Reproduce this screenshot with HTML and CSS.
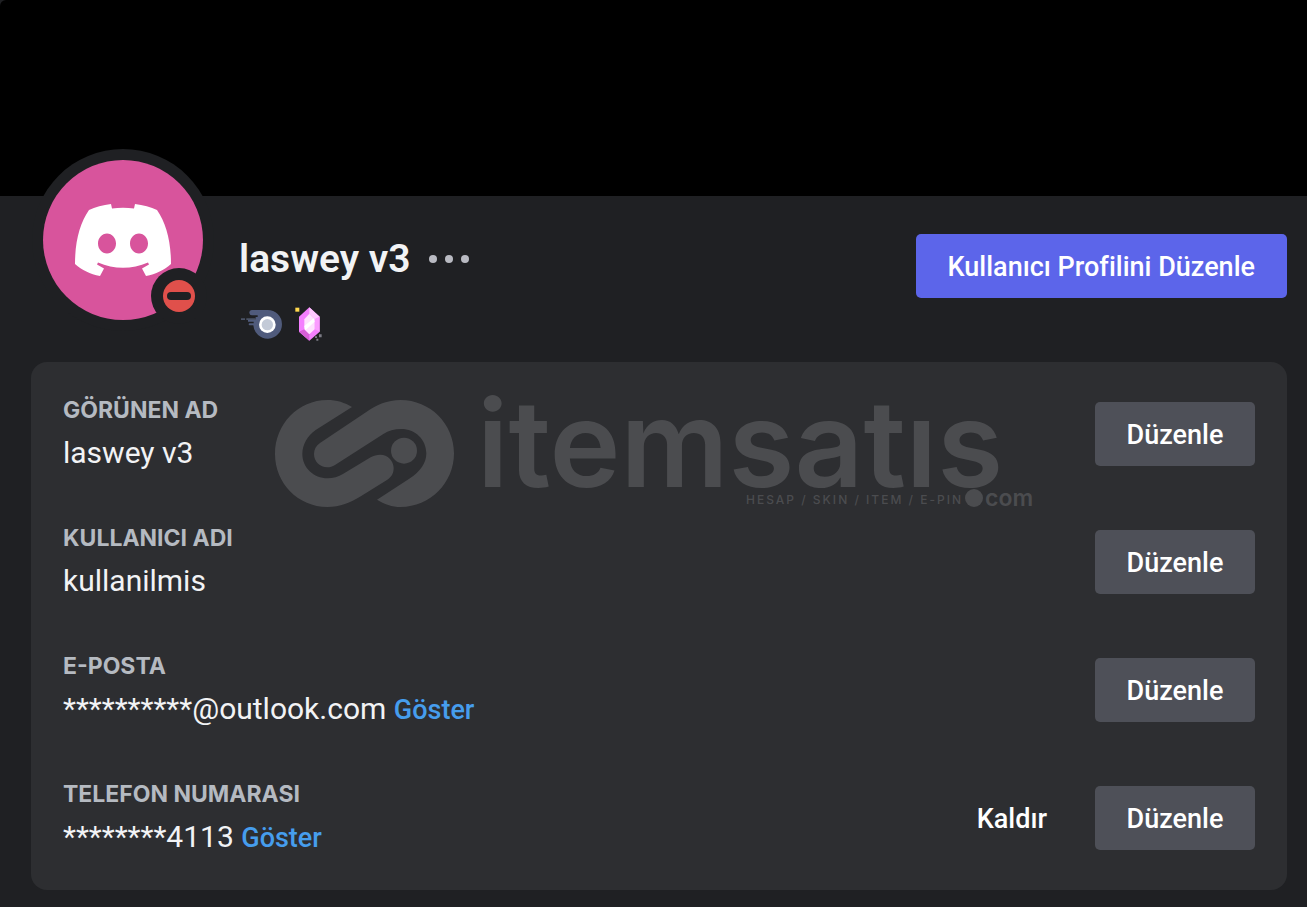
FILE: index.html
```html
<!DOCTYPE html>
<html lang="tr">
<head>
<meta charset="utf-8">
<meta name="viewport" content="width=device-width, initial-scale=1">
<title>Hesabım</title>
<link rel="stylesheet" href="styles.css">
</head>
<body>
<main class="account">
  <div class="banner"></div>

  <header class="profile">
    <svg class="avatar" viewBox="0 0 182 182" role="img" aria-label="Avatar, rahatsız etmeyin">
      <circle class="avatar-ring" cx="91" cy="91" r="91"/>
      <circle class="avatar-fill" cx="91" cy="91" r="80"/>
      <path class="avatar-mark" fill-rule="evenodd" d="M79 55 C71 56 63 58 57 61 C48 74 43 92 43 115 C50 121 58 125 68 127 L72 119.500 L65 115.500 L66 113.500 C82 120.500 100 120.500 116 113.500 L117 115.500 L110 119.500 L114 127 C124 125 132 121 139 115 C139 92 134 74 125 61 C119 58 111 56 103 55 L102 59.500 C95 58.500 87 58.500 80 59.500 Z M75 84.500 C80 84.500 84 89 84 94.500 C84 100 80 104.500 75 104.500 C70 104.500 66 100 66 94.500 C66 89 70 84.500 75 84.500 Z M107 84.500 C112 84.500 116 89 116 94.500 C116 100 112 104.500 107 104.500 C102 104.500 98 100 98 94.500 C98 89 102 84.500 107 84.500 Z"/>
      <circle class="avatar-ring" cx="147" cy="147" r="28"/>
      <circle class="status" cx="147" cy="147" r="16"/>
      <rect class="avatar-ring" x="135" y="143" width="24" height="8" rx="4"/>
    </svg>

    <div class="identity">
      <div class="name-row">
        <h1 class="name">laswey v3</h1>
        <button class="more" type="button" aria-label="Diğer">
          <svg viewBox="0 0 40 8" width="40" height="8"><circle cx="4" cy="4" r="4"/><circle cx="20" cy="4" r="4"/><circle cx="36" cy="4" r="4"/></svg>
        </button>
      </div>
      <div class="badges">
        <svg width="41" height="36" viewBox="0 0 123 108" aria-hidden="true">
          <path fill="#505b7c" d="M32 12 H80 A43 43 0 1 1 37 58 H26 A3 3 0 0 1 26 52 H38 V47 H21 V40 H44 V33 H50 V28 H34 A8 8 0 0 1 32 12 Z"/>
          <path fill="#4a5266" d="M0 37 H12 V42 H0 Z M16 37 H44 V42 H16 Z"/>
          <circle cx="79" cy="56" r="25" fill="#fff"/><circle cx="79" cy="56" r="17" fill="#c3cad7"/>
        </svg>
        <svg width="27" height="34" viewBox="0 0 81 102" aria-hidden="true">
          <path fill="#f47fff" d="M43 1 L74 29 V74 L43 101 L12 74 V29 Z"/>
          <path fill="#ffc8ff" d="M43 1 L74 29 L59 37 L43 20 Z"/>
          <path fill="#d65fd6" d="M12 74 L28 67 L43 82 V101 Z"/>
          <path fill="#fb9cff" d="M74 29 V74 L59 67 V37 Z"/>
          <path fill="#ffe1ff" d="M43 20 L59 37 V67 L43 82 L28 67 V37 Z"/>
          <path fill="#fff" d="M28 57 L56 34 L59 44 L31 70 Z"/>
          <path fill="#ffd84d" d="M1 2 H13 V14 H1 Z"/>
          <path fill="#7c7c86" d="M72 82 H80 V91 H72 Z M60 88 H66 V93 H60 Z M64 95 H70 V101 H64 Z"/>
        </svg>
      </div>
    </div>

    <button class="button button-primary" type="button">Kullanıcı Profilini Düzenle</button>
  </header>

  <section class="card">
    <dl class="fields">
      <div class="field">
        <div class="field-text"><dt>GÖRÜNEN AD</dt><dd>laswey v3</dd></div>
        <button class="button" type="button">Düzenle</button>
      </div>
      <div class="field">
        <div class="field-text"><dt>KULLANICI ADI</dt><dd>kullanilmis</dd></div>
        <button class="button" type="button">Düzenle</button>
      </div>
      <div class="field">
        <div class="field-text"><dt>E-POSTA</dt><dd>**********@outlook.com <a class="reveal" href="#eposta">Göster</a></dd></div>
        <button class="button" type="button">Düzenle</button>
      </div>
      <div class="field">
        <div class="field-text"><dt>TELEFON NUMARASI</dt><dd>********4113 <a class="reveal" href="#telefon">Göster</a></dd></div>
        <button class="button button-plain" type="button">Kaldır</button>
        <button class="button" type="button">Düzenle</button>
      </div>
    </dl>

    <div class="watermark">
      <svg class="watermark-logo" viewBox="45 60 537 321" aria-hidden="true">
        <path d="M276 81 C255 68 230 60 202 60 C115 60 45 132 45 222 C45 310 115 381 202 381 C240 381 272 367 300 350 L382 299 C397 289 401 277 401 264 C401 242 383 224 361 224 C350 224 341 227 332 232 L250 281 C235 290 219 295 203 295 C161 295 127 263 127 222 C127 193 143 167 167 150 Z"/>
        <path d="M180 189 L320 95 C350 75 381 60 422 60 C510 60 582 131 582 220 C582 309 510 381 422 381 C397 381 372 372 351 359 L450 295 C480 275 499 250 499 220 C499 178 465 147 424 147 C402 147 386 152 370 162 L225 255 C217 260 210 262 202 262 C180 262 162 244 162 222 C162 208 168 197 180 189 Z"/>
        <circle cx="432" cy="212" r="39"/>
      </svg>
      <div class="watermark-text">
        <!-- The round dot in the line below serves as the cedilla of the last letter -->
        <span class="wordmark">itemsatıs</span>
        <div class="watermark-foot"><span class="tagline">HESAP / SKIN / ITEM / E-PIN</span><span class="dot"></span><span class="domain">com</span></div>
      </div>
    </div>
  </section>
</main>
</body>
</html>
```
FILE: styles.css
```css
* { box-sizing: border-box; }

body {
  margin: 0;
  background: #1f2023;
  color: #f2f3f5;
  font-family: Roboto, "Noto Sans", sans-serif;
}

.account { padding-bottom: 16px; }

.banner {
  height: 196px;
  background: #000;
  border-top-left-radius: 6px;
}

.profile {
  display: flex;
  align-items: flex-start;
  height: 166px;
  padding: 0 20px 0 32px;
}

.avatar {
  flex: none;
  width: 182px;
  height: 182px;
  margin-top: -47px;
}
.avatar-ring { fill: #1f2023; }
.avatar-fill { fill: #d8549c; }
.avatar-mark { fill: #fff; }
.status { fill: #e0504b; }

.identity {
  flex: 1;
  padding: 39px 0 0 25px;
}
.name-row { display: flex; align-items: center; gap: 18px; }
.name {
  margin: 0;
  font-size: 39px;
  line-height: 48px;
  font-weight: 600;
}
.more {
  display: flex;
  padding: 0;
  border: 0;
  background: none;
  cursor: pointer;
}
.more svg { fill: #b9bac2; }
.badges { display: flex; align-items: center; gap: 13px; padding: 23px 0 0 2px; }

.button {
  flex: none;
  min-width: 160px;
  height: 64px;
  padding: 2px 31px 0;
  border: 0;
  border-radius: 5px;
  background: #4e5058;
  color: #fff;
  font-family: inherit;
  font-size: 27px;
  font-weight: 500;
  cursor: pointer;
}
.button-primary {
  margin-top: 38px;
  padding: 2px 32px 0;
  background: #5c65ea;
}
.button-plain {
  min-width: 0;
  padding: 2px 16px 0;
  background: transparent;
}

.card {
  position: relative;
  margin: 0 20px 0 31px;
  padding: 35px 32px;
  border-radius: 16px;
  background: #2d2e31;
}

.fields {
  display: flex;
  flex-direction: column;
  gap: 54px;
  margin: 0;
}
.field {
  display: flex;
  align-items: center;
  gap: 32px;
}
.field-text { flex: 1; }
.field dt {
  color: #b5bac1;
  font-family: Inter, sans-serif;
  font-size: 23px;
  line-height: 26px;
  font-weight: 700;
}
.field dd {
  margin: 12px 0 0;
  font-size: 30px;
  line-height: 36px;
}
.reveal {
  color: #469ded;
  font-size: 27px;
  line-height: 1;
  font-weight: 500;
  text-decoration: none;
}

.watermark {
  position: absolute;
  top: 38px;
  left: 244px;
  display: flex;
  gap: 23px;
  color: #4b4c4f;
  font-family: Inter, sans-serif;
  pointer-events: none;
}
.watermark-logo {
  width: 179px;
  height: 107px;
  fill: currentColor;
}
.wordmark {
  display: block;
  font-size: 120px;
  line-height: 88px;
  font-weight: 600;
}
.watermark-foot {
  display: flex;
  align-items: center;
  justify-content: flex-end;
  gap: 2px;
  margin-right: -30px;
}
.tagline {
  padding-top: 4px;
  font-size: 12px;
  line-height: 16px;
  font-weight: 500;
  letter-spacing: 2px;
}
.dot {
  width: 18px;
  height: 18px;
  border-radius: 50%;
  background: currentColor;
}
.domain {
  font-size: 23px;
  line-height: 18px;
  font-weight: 600;
}
```
